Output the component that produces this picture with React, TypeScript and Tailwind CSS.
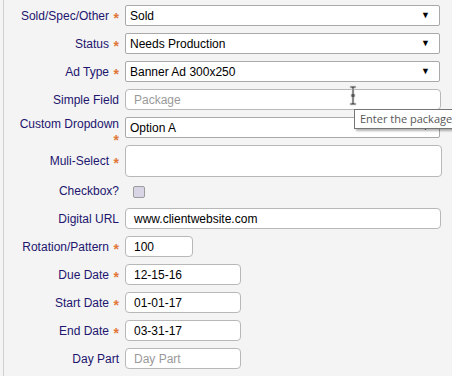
import type { ReactNode } from 'react'

const font = { fontFamily: '"Liberation Sans", Arial, sans-serif' }

function Star() {
  return <span className="relative top-[3px] ml-[4px] inline-block w-[6px] text-[14px] font-bold leading-[0] text-[#e0783a]">*</span>
}

function Row({
  label,
  required,
  children,
  h = 'h-[21px]',
  labelClass = 'pt-[3.5px]',
}: {
  label: ReactNode
  required?: boolean
  children: ReactNode
  h?: string
  labelClass?: string
}) {
  return (
    <div className={`flex ${h}`}>
      <div className={`w-[119px] shrink-0 text-right leading-[14px] text-[#22156e] ${labelClass}`}>
        {label}
        {required && <Star />}
      </div>
      <div className="ml-[6px] flex-1">{children}</div>
    </div>
  )
}

function Select({ value }: { value: string }) {
  return (
    <div className="flex h-[21px] w-[315px] items-center justify-between rounded-[2px] border border-[#a9a9a9] bg-white pl-[4px] pr-[9px] text-black">
      <span>{value}</span>
      <span className="text-[9px] leading-none">▼</span>
    </div>
  )
}

function Input({ value, placeholder, w }: { value?: string; placeholder?: string; w: string }) {
  return (
    <div
      className={`flex h-[21px] items-center rounded-[4px] border border-[#b8b8b8] bg-white pl-[8px] ${w} ${
        value ? 'text-black' : 'text-[#9a9a9a]'
      }`}
    >
      {value || placeholder}
    </div>
  )
}

export default function App() {
  return (
    <div className="relative h-[376px] w-[452px] overflow-hidden bg-[#f4f4f4] text-[12px]" style={font}>
      <div className="absolute left-[3px] top-0 h-full w-px bg-[#cfcfcf]" />
      <div className="flex flex-col gap-[7px] pt-[5px]">
        <Row label="Sold/Spec/Other" required>
          <Select value="Sold" />
        </Row>
        <Row label="Status" required>
          <Select value="Needs Production" />
        </Row>
        <Row label="Ad Type" required>
          <Select value="Banner Ad 300x250" />
        </Row>
        <Row label="Simple Field">
          <Input placeholder="Package" w="w-[316px]" />
        </Row>
        <Row
          label={
            <>
              Custom Dropdown
              <br />
            </>
          }
          required
          labelClass="pt-0 -mt-[0.5px]"
        >
          <Select value="Option A" />
        </Row>
        <Row label="Muli-Select" required h="h-[32px]" labelClass="pt-[9px]">
          <div className="h-[32px] w-[317px] rounded-[4px] border border-[#b8b8b8] bg-white" />
        </Row>
        <Row label="Checkbox?" h="h-[17px]" labelClass="pt-[0px]">
          <div className="ml-[8px] mt-[2px] h-[12px] w-[12px] rounded-[2px] border border-[#9c9c9c] bg-[#d9d5e6]" />
        </Row>
        <Row label="Digital URL">
          <Input value="www.clientwebsite.com" w="w-[316px]" />
        </Row>
        <Row label="Rotation/Pattern" required>
          <Input value="100" w="w-[68px]" />
        </Row>
        <Row label="Due Date" required>
          <Input value="12-15-16" w="w-[116px]" />
        </Row>
        <Row label="Start Date" required>
          <Input value="01-01-17" w="w-[116px]" />
        </Row>
        <Row label="End Date" required>
          <Input value="03-31-17" w="w-[116px]" />
        </Row>
        <Row label="Day Part">
          <Input placeholder="Day Part" w="w-[116px]" />
        </Row>
      </div>

      {/* text cursor */}
      <svg className="absolute left-[349px] top-[85px]" width="8" height="21" viewBox="0 0 8 21">
        <path
          d="M1 1h6v2H5v6h1v3H5v6h2v2H1v-2h2v-6H2V9h1V3H1z"
          fill="#555"
          stroke="#ddd"
          strokeWidth="0.8"
        />
      </svg>

      {/* tooltip */}
      <div
        className="absolute left-[354px] top-[109px] flex h-[20px] items-center whitespace-nowrap border border-[#767676] bg-white pl-[5px] pr-[6px] text-[11px] text-[#575757] shadow-[2px_2px_2px_rgba(0,0,0,0.3)]"
        style={{ fontFamily: '"Open Sans", "Noto Sans", sans-serif' }}
      >
        Enter the package name
      </div>
    </div>
  )
}
